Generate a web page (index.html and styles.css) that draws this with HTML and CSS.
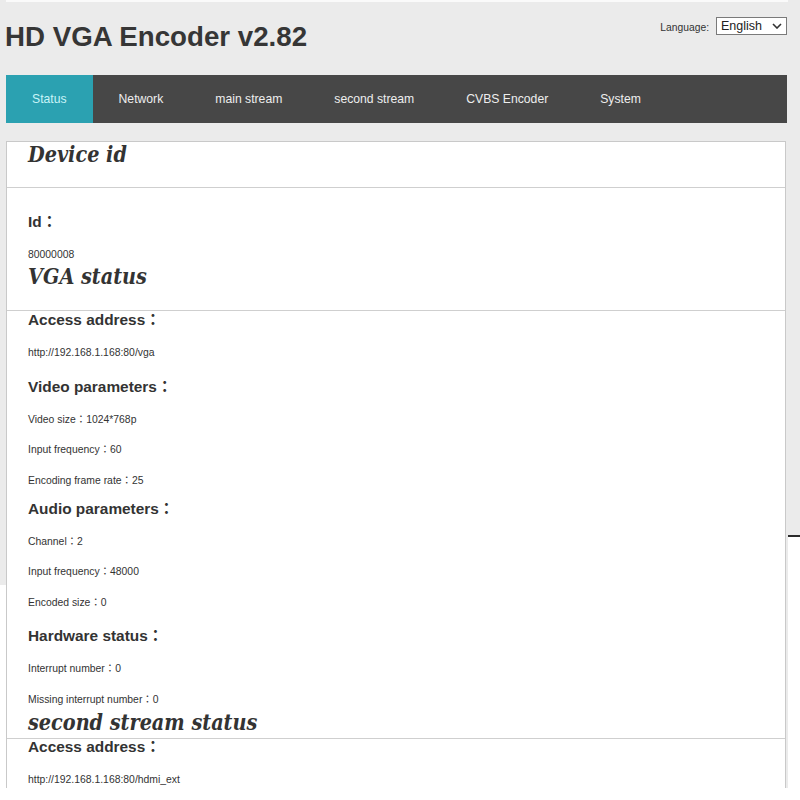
FILE: index.html
```html
<!DOCTYPE html>
<html lang="en">
<head>
<meta charset="utf-8">
<title>HD VGA Encoder v2.82</title>
<link rel="stylesheet" href="styles.css">
</head>
<body>
<div class="page">
  <header class="top">
    <h1 class="title">HD VGA Encoder v2.82</h1>
    <div class="lang">
      <span class="lang-label">Language:</span>
      <div class="select">
        <span>English</span>
        <svg class="chev" width="10" height="6" viewBox="0 0 10 6"><path d="M1 1 L5 5 L9 1" fill="none" stroke="#333" stroke-width="1.6"/></svg>
      </div>
    </div>
  </header>
  <nav class="tabs">
    <a class="tab active">Status</a>
    <a class="tab">Network</a>
    <a class="tab">main stream</a>
    <a class="tab">second stream</a>
    <a class="tab">CVBS Encoder</a>
    <a class="tab">System</a>
  </nav>
  <main class="panel">
    <section class="sec sec-device">
      <div class="sec-head"><h2>Device id</h2></div>
      <div class="sec-body">
        <p class="label">Id：</p>
        <p class="val">80000008</p>
      </div>
    </section>
    <section class="sec sec-vga">
      <div class="sec-head"><h2>VGA status</h2></div>
      <div class="sec-body">
        <p class="label">Access address：</p>
        <p class="val">http://192.168.1.168:80/vga</p>
        <p class="label">Video parameters：</p>
        <p class="val">Video size：1024*768p</p>
        <p class="val">Input frequency：60</p>
        <p class="val">Encoding frame rate：25</p>
        <p class="label label-tight">Audio parameters：</p>
        <p class="val">Channel：2</p>
        <p class="val">Input frequency：48000</p>
        <p class="val">Encoded size：0</p>
        <p class="label">Hardware status：</p>
        <p class="val">Interrupt number：0</p>
        <p class="val">Missing interrupt number：0</p>
      </div>
    </section>
    <section class="sec sec-second">
      <div class="sec-head"><h2>second stream status</h2></div>
      <div class="sec-body">
        <p class="label">Access address：</p>
        <p class="val">http://192.168.1.168:80/hdmi_ext</p>
      </div>
    </section>
  </main>
</div>
</body>
</html>
```

FILE: styles.css
```css
* { box-sizing: border-box; }

body {
  margin: 0;
  min-height: 800px;
  background:
    linear-gradient(to bottom, #ebebeb 585px, #fff 585px) left top / 6px 100% no-repeat,
    linear-gradient(to bottom, #ebebeb 535px, #2b2b2b 535px, #2b2b2b 537px, #fff 537px) right top / 12px 100% no-repeat,
    linear-gradient(to bottom, #fafafa 2px, #ebebeb 2px, #ebebeb 788px, #fff 788px);
  font-family: "Liberation Sans", "Noto Sans CJK TC", sans-serif;
  color: #333;
}

.page {
  width: 787px;
  height: 788px;
  padding-left: 6px;
  overflow: hidden;
}

.top {
  height: 75px;
  padding-top: 17px;
  display: flex;
  justify-content: space-between;
  align-items: flex-start;
}

.title {
  margin: 4px 0 0 -1px;
  font: bold 27.7px/32px "Liberation Sans", sans-serif;
  color: #363636;
}

.lang {
  display: flex;
  align-items: flex-start;
  gap: 7px;
}

.lang-label {
  margin-top: 5px;
  font: 10.3px/12px "Liberation Sans", sans-serif;
  color: #333;
}

.select {
  width: 71px;
  height: 18px;
  border: 1px solid #7a7a7a;
  background: #fff;
  display: flex;
  align-items: center;
  justify-content: space-between;
  padding: 0 4px 0 4px;
  font: 12.5px/16px "Liberation Sans", sans-serif;
  color: #222;
}

.chev { display: block; }

.tabs {
  display: flex;
  height: 48px;
  background: #474747;
}

.tab {
  display: flex;
  align-items: center;
  padding: 0 26px;
  font: 12.2px "Liberation Sans", sans-serif;
  color: #eeeeee;
}

.tab.active {
  background: #2ba1b1;
  color: #c8f4f8;
}

.panel {
  margin-top: 18px;
  width: 780px;
  background: #fff;
  border: 1px solid #c9c9c9;
}

.sec-head {
  border-bottom: 1px solid #cfcfcf;
  padding: 0 21px 21.5px;
}

.sec-head h2 {
  margin: -5.5px 0 0;
  font: italic bold 21.4px/24px "DejaVu Serif Condensed", "DejaVu Serif", serif;
  color: #333;
}

.sec-device .sec-head { padding-top: 1px; padding-bottom: 20px; }
.sec-device .sec-head h2 { margin-top: -0.5px; }
.sec-device .sec-body { padding-top: 25px; }

.sec-second .sec-head { padding-bottom: 3px; }
.sec-second .sec-head h2 { margin-top: -3.9px; }

.sec-body {
  padding: 0 21px;
}

.label {
  margin: 8px 0;
  font: bold 15.4px/20px "Liberation Sans", "Noto Sans CJK TC", sans-serif;
  color: #333;
}

.label:first-child { margin-top: -1px; }
.sec-second .label:first-child { margin-top: -2px; }
.label-tight { margin-top: 2.5px; }

.val {
  margin: 0;
  font: 10.4px/30.5px "Liberation Sans", "Noto Sans CJK TC", sans-serif;
  color: #333;
}
```
